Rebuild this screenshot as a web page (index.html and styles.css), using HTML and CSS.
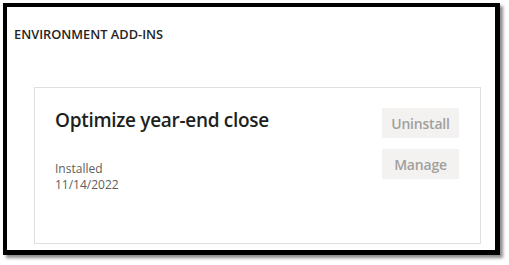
FILE: index.html
```html
<!DOCTYPE html>
<html>
<head>
<meta charset="utf-8">
<link rel="stylesheet" href="styles.css">
</head>
<body>
<div class="frame">
  <h2 class="section-title">ENVIRONMENT ADD-INS</h2>
  <div class="card">
    <div class="card-info">
      <h3 class="addin-name">Optimize year-end close</h3>
      <div class="meta">
        <div>Installed</div>
        <div>11/14/2022</div>
      </div>
    </div>
    <div class="actions">
      <button class="btn">Uninstall</button>
      <button class="btn">Manage</button>
    </div>
  </div>
</div>
</body>
</html>
```
FILE: styles.css
```css
html, body {
  margin: 0;
  padding: 0;
  background: #ffffff;
}
body {
  font-family: "Open Sans", "Noto Sans", sans-serif;
  width: 509px;
  height: 265px;
  overflow: hidden;
}
.frame {
  box-sizing: border-box;
  margin: 3px 0 0 3px;
  width: 497px;
  height: 252px;
  border-style: solid;
  border-color: #000;
  border-width: 4px 5px 5px 4px;
  background: #fff;
  box-shadow: 3px 3px 3px rgba(0, 0, 0, 0.45);
  padding: 0 14px 0 7px;
  display: flex;
  flex-direction: column;
}
.section-title {
  margin: 19px 0 0 0;
  font-size: 12.8px;
  font-weight: 600;
  color: #252423;
  line-height: 16px;
}
.card {
  margin: 45px 0 0 20px;
  border: 1px solid #e1dfdd;
  height: 157px;
  box-sizing: border-box;
  display: flex;
  justify-content: space-between;
  padding: 20px 21px 0 20px;
}
.addin-name {
  margin: 0;
  font-size: 19px;
  font-weight: 600;
  color: #201f1e;
  line-height: 24px;
  letter-spacing: -0.3px;
}
.meta {
  margin-top: 29px;
  font-size: 12px;
  color: #605e5c;
  line-height: 16px;
}
.actions {
  display: flex;
  flex-direction: column;
  gap: 11px;
}
.btn {
  font-family: "Open Sans", "Noto Sans", sans-serif;
  width: 77px;
  height: 30px;
  border: none;
  background: #f3f2f1;
  color: #a19f9d;
  font-size: 14px;
  font-weight: 600;
  padding: 0;
  letter-spacing: -0.2px;
}
```
